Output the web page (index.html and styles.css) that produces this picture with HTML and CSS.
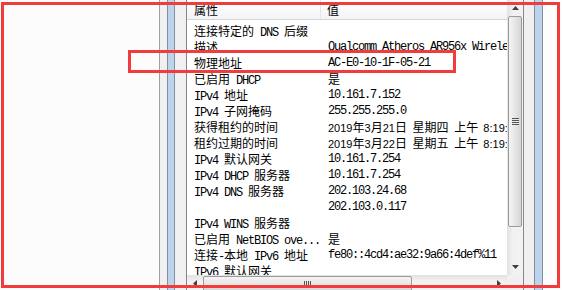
FILE: index.html
```html
<!DOCTYPE html>
<html lang="zh-CN">
<head>
    <meta charset="UTF-8">
    <title>网络连接详细信息</title>
    <link rel="stylesheet" href="styles.css">
</head>
<body>
    <div class="screen">
        <div class="blank"></div>
        <div class="frame-left"></div>
        <div class="listview">
            <div class="list">
                <div class="header">
                    <div class="hcell name"><span class="zh">属性</span></div>
                    <div class="hcell value"><span class="zh">值</span></div>
                </div>
                <div class="rows">
                    <div class="row"><div class="name"><span class="zh">连接特定的</span> DNS <span class="zh">后缀</span></div><div class="value"></div></div>
                    <div class="row"><div class="name"><span class="zh">描述</span></div><div class="value">Qualcomm Atheros AR956x Wireless Network Adapter</div></div>
                    <div class="row"><div class="name"><span class="zh">物理地址</span></div><div class="value">AC-E0-10-1F-05-21</div></div>
                    <div class="row"><div class="name"><span class="zh">已启用</span> DHCP</div><div class="value"><span class="zh">是</span></div></div>
                    <div class="row"><div class="name">IPv4 <span class="zh">地址</span></div><div class="value">10.161.7.152</div></div>
                    <div class="row"><div class="name">IPv4 <span class="zh">子网掩码</span></div><div class="value">255.255.255.0</div></div>
                    <div class="row"><div class="name"><span class="zh">获得租约的时间</span></div><div class="value date">2019<span class="zh">年</span>3<span class="zh">月</span>21<span class="zh">日 星期四 上午</span> 8:19:24</div></div>
                    <div class="row"><div class="name"><span class="zh">租约过期的时间</span></div><div class="value date">2019<span class="zh">年</span>3<span class="zh">月</span>22<span class="zh">日 星期五 上午</span> 8:19:24</div></div>
                    <div class="row"><div class="name">IPv4 <span class="zh">默认网关</span></div><div class="value">10.161.7.254</div></div>
                    <div class="row"><div class="name">IPv4 DHCP <span class="zh">服务器</span></div><div class="value">10.161.7.254</div></div>
                    <div class="row"><div class="name">IPv4 DNS <span class="zh">服务器</span></div><div class="value">202.103.24.68</div></div>
                    <div class="row"><div class="name"></div><div class="value">202.103.0.117</div></div>
                    <div class="row"><div class="name">IPv4 WINS <span class="zh">服务器</span></div><div class="value"></div></div>
                    <div class="row"><div class="name"><span class="zh">已启用</span> NetBIOS ove...</div><div class="value"><span class="zh">是</span></div></div>
                    <div class="row"><div class="name"><span class="zh">连接</span>-<span class="zh">本地</span> IPv6 <span class="zh">地址</span></div><div class="value">fe80::4cd4:ae32:9a66:4def%11</div></div>
                    <div class="row"><div class="name">IPv6 <span class="zh">默认网关</span></div><div class="value"></div></div>
                </div>
            </div>

            <!-- vertical scrollbar -->
            <div class="vscroll">
                <div class="btn">
                    <svg width="7" height="4" viewBox="0 0 7 4"><path d="M0 4H7L3.5 0Z"/></svg>
                </div>
                <div class="vtrack">
                    <div class="vthumb">
                        <div class="grip-h"></div>
                    </div>
                </div>
                <div class="btn">
                    <svg width="7" height="4" viewBox="0 0 7 4"><path d="M0 0H7L3.5 4Z"/></svg>
                </div>
            </div>

            <!-- horizontal scrollbar -->
            <div class="hscroll">
                <div class="btn">
                    <svg width="4" height="7" viewBox="0 0 4 7"><path d="M4 0V7L0 3.5Z"/></svg>
                </div>
                <div class="htrack">
                    <div class="hthumb">
                        <div class="grip-v"></div>
                    </div>
                </div>
                <div class="btn">
                    <svg width="4" height="7" viewBox="0 0 4 7"><path d="M0 0V7L4 3.5Z"/></svg>
                </div>
            </div>
            <div class="corner"></div>
        </div>
        <div class="frame-right"></div>
    </div>

    <!-- annotation boxes drawn over the screenshot -->
    <div class="mark outer"></div>
    <div class="mark inner"></div>
</body>
</html>
```

FILE: styles.css
```css
body {
    margin: 0;
    background-color: #fcfcfc;
    font-family: "Liberation Mono", "Noto Sans CJK SC", monospace;
    font-size: 12px;
    letter-spacing: -1.2px;
    color: #000;
    overflow: hidden;
}
.zh {
    font-family: "Noto Sans CJK SC", sans-serif;
    font-size: 12px;
    letter-spacing: 0;
}
.screen {
    display: flex;
    height: 292px;
}
.blank {
    width: 159px;
}
.frame-left {
    width: 27px;
    background: linear-gradient(to right,
        #a0a0a0 0 1px, #f0f0f0 1px 8px, #858e99 8px 9px,
        #bcd3ec 9px 15px, #858e99 15px 16px, #f0f0f0 16px);
}
.frame-right {
    flex: 1;
    background: linear-gradient(to right,
        #f0f0f0 0 10px, #858e99 10px 11px, #bcd3ec 11px 18px,
        #858e99 18px 19px, #fdfdfd 19px);
}
.listview {
    width: 336px;
    border-left: 1px solid #828790;
    border-right: 1px solid #828790;
    background-color: #fff;
    display: grid;
    grid-template-columns: 320px 16px;
    grid-template-rows: 275px 17px;
}
.list {
    overflow: hidden;
    white-space: nowrap;
}
.header {
    display: flex;
    height: 19px;
    line-height: 19px;
    border-bottom: 1px solid #d5d5d5;
    background: linear-gradient(#ffffff, #f3f4f6);
}
.hcell.name {
    flex: none;
    width: 134px;
    padding-left: 7px;
    box-sizing: border-box;
    border-right: 1px solid #e3e5e8;
}
.hcell.value {
    padding-left: 6px;
}
.rows {
    padding-top: 3px;
}
.row {
    display: flex;
    height: 16px;
    line-height: 16px;
}
.row .name {
    flex: none;
    width: 135px;
    padding-left: 7px;
    box-sizing: border-box;
    overflow: hidden;
}
.row .value {
    flex: none;
    padding-left: 6px;
}
.date {
    font-family: "Liberation Sans", "Noto Sans CJK SC", sans-serif;
    font-size: 11px;
    letter-spacing: 0;
    word-spacing: 2px;
}
.date .zh {
    word-spacing: 3px;
}
.vscroll {
    display: flex;
    flex-direction: column;
    background: linear-gradient(to right, #e3e3e3, #f2f2f2 40%, #f2f2f2);
}
.vscroll .btn {
    height: 16px;
}
.btn {
    display: flex;
    align-items: center;
    justify-content: center;
    flex: none;
}
.btn svg {
    fill: #404040;
}
.vtrack {
    flex: 1;
}
.vthumb {
    height: 209px;
    margin: 0 1px;
    border: 1px solid #9b9b9b;
    border-radius: 2px;
    background: linear-gradient(to right, #f4f4f4, #e6e6e6 50%, #d4d4d4);
    display: flex;
    align-items: center;
    justify-content: center;
}
.grip-h {
    width: 7px;
    height: 7px;
    background: repeating-linear-gradient(#555 0 1px, #e8e8e8 1px 2px);
}
.hscroll {
    display: flex;
    background: linear-gradient(#e3e3e3, #f2f2f2 40%, #f2f2f2);
}
.hscroll .btn {
    width: 16px;
}
.htrack {
    flex: 1;
}
.hthumb {
    width: 207px;
    height: 14px;
    margin-top: 1px;
    border: 1px solid #9b9b9b;
    border-radius: 2px;
    background: linear-gradient(#f4f4f4, #e6e6e6 50%, #d4d4d4);
    display: flex;
    align-items: center;
    justify-content: center;
}
.grip-v {
    width: 7px;
    height: 7px;
    background: repeating-linear-gradient(to right, #555 0 1px, #e8e8e8 1px 2px);
}
.corner {
    background-color: #f0f0f0;
}
.mark {
    position: absolute;
    box-sizing: border-box;
    border: 3px solid #f23c3c;
}
.outer {
    left: 1px;
    top: 2px;
    width: 559px;
    height: 286px;
}
.inner {
    left: 128px;
    top: 50px;
    width: 328px;
    height: 23px;
}
```
